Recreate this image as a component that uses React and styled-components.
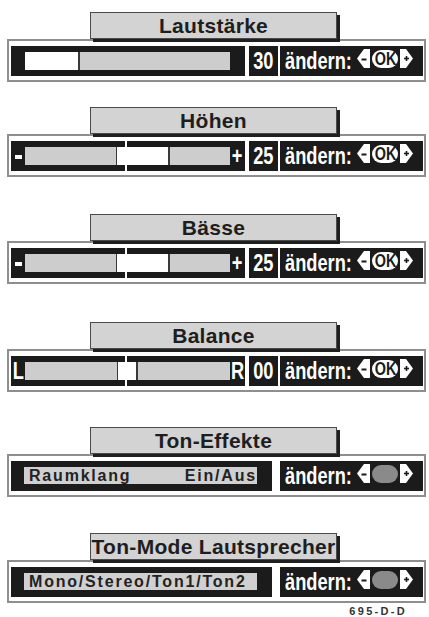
import styled, { createGlobalStyle } from 'styled-components';

const GlobalStyle = createGlobalStyle`
  * { box-sizing: border-box; }
  html, body { margin: 0; padding: 0; background: #fff; }
  body {
    width: 429px;
    height: 617px;
    overflow: hidden;
    font-family: "Liberation Sans", Arial, sans-serif;
  }
`;

const Page = styled.div`
  display: flex;
  flex-direction: column;
  width: 429px;
`;

const Section = styled.section`
  display: flex;
  flex-direction: column;
  margin-top: ${(p) => p.$top}px;
`;

const Title = styled.div`
  position: relative;
  z-index: 1;
  margin-left: 90px;
  width: 247px;
  height: 27px;
  background: #d3d3d3;
  border: 1px solid #4a4a4a;
  box-shadow: 3px 3px 0 #1f1f1f;
  font-size: 21px;
  font-weight: 700;
  line-height: 25px;
  letter-spacing: 0.3px;
  color: #1e1e1e;
  text-align: center;
  white-space: nowrap;
`;

const Panel = styled.div`
  display: flex;
  align-items: stretch;
  margin-left: 7px;
  width: 419px;
  height: 43px;
  padding: 5px 1px 4px 2px;
  border: 2px solid #8e8e8e;
  background: #fff;
`;

const Cond = styled.span`
  display: inline-block;
  font-size: 24px;
  font-weight: 700;
  line-height: 30px;
  color: #fff;
  white-space: nowrap;
  transform: scaleX(0.76);
  transform-origin: ${(p) => p.$origin || 'center'} center;
`;

const SliderBar = styled.div`
  display: flex;
  align-items: center;
  width: 234px;
  background: #1b1b1b;
`;

const Sign = styled.div`
  display: flex;
  align-items: center;
  justify-content: center;
  width: ${(p) => p.$w}px;
  height: 100%;
  overflow: visible;
`;

const Minus = styled.div`
  width: 7px;
  height: 4px;
  margin-top: 2px;
  background: #fff;
`;

const Track = styled.div`
  position: relative;
  flex: 1;
  height: 18px;
  background: #cdcdcd;
`;

const Fill = styled.div`
  position: absolute;
  top: 0;
  bottom: 0;
  background: #fff;
  border-left: ${(p) => (p.$edge ? '1px solid #3a3a3a' : 'none')};
  border-right: 2px solid #3a3a3a;
`;

const CenterMark = styled.div`
  position: absolute;
  left: 100px;
  top: -6px;
  bottom: -6px;
  width: 2px;
  background: #fff;
`;

const NumberBox = styled.div`
  display: flex;
  align-items: center;
  justify-content: center;
  width: 29px;
  margin: 0 2px 0 4px;
  background: #1b1b1b;
`;

const ChangeBox = styled.div`
  display: flex;
  align-items: center;
  width: 143px;
  margin-left: auto;
  padding-left: 5px;
  background: #1b1b1b;
`;

const ChangeLabel = styled.div`
  width: 72px;
  height: 100%;
  overflow: visible;
`;

const Control = styled.div`
  display: flex;
  align-items: center;
  margin-bottom: 5px;
`;

const Pill = styled.div`
  display: flex;
  align-items: center;
  justify-content: center;
  width: 26px;
  height: 18px;
  margin: 0 2px 0 2px;
  border-radius: 9px;
  background: ${(p) => (p.$empty ? '#8a8a8a' : '#fff')};
`;

const PillText = styled.span`
  display: inline-block;
  font-size: 18px;
  font-weight: 700;
  line-height: 18px;
  color: #1b1b1b;
  transform: scaleX(0.8);
`;

const TextBar = styled.div`
  display: flex;
  width: 261px;
  padding: 6px 15px 7px 13px;
  background: #1b1b1b;
`;

const TextField = styled.div`
  display: flex;
  flex: 1;
  align-items: center;
  justify-content: space-between;
  padding-left: 5px;
  background: #d0d0d0;
  font-size: 16px;
  font-weight: 700;
  line-height: 17px;
  letter-spacing: 1.8px;
  color: #222;
  white-space: nowrap;
`;

const Code = styled.div`
  margin-top: 2px;
  padding-right: 22px;
  text-align: right;
  font-size: 11px;
  font-weight: 700;
  line-height: 12px;
  letter-spacing: 2.3px;
  color: #333;
`;

function ArrowLeft() {
  return (
    <svg width="13" height="21" viewBox="0 0 13 21">
      <polygon points="0,10.5 7,1 13,1 13,20 7,20" fill="#fff" />
      <rect x="4.5" y="10.5" width="5" height="2" fill="#1b1b1b" />
    </svg>
  );
}

function ArrowRight() {
  return (
    <svg width="13" height="21" viewBox="0 0 13 21">
      <polygon points="0,1 6,1 13,10.5 6,20 0,20" fill="#fff" />
      <rect x="4" y="9.7" width="5" height="1.6" fill="#1b1b1b" />
      <rect x="5.7" y="8" width="1.6" height="5" fill="#1b1b1b" />
    </svg>
  );
}

function Change({ empty }) {
  return (
    <ChangeBox>
      <ChangeLabel>
        <Cond $origin="left">ändern:</Cond>
      </ChangeLabel>
      <Control>
        <ArrowLeft />
        <Pill $empty={empty}>{!empty && <PillText>OK</PillText>}</Pill>
        <ArrowRight />
      </Control>
    </ChangeBox>
  );
}

const sections = [
  { title: 'Lautstärke', top: 12, kind: 'slider', value: '30', fill: [0, 55], center: false, signs: ['', ''] },
  { title: 'Höhen', top: 25, kind: 'slider', value: '25', fill: [91, 54], center: true, signs: ['-', '+'] },
  { title: 'Bässe', top: 37, kind: 'slider', value: '25', fill: [91, 54], center: true, signs: ['-', '+'] },
  { title: 'Balance', top: 38, kind: 'slider', value: '00', fill: [92, 21], center: true, signs: ['L', 'R'] },
  { title: 'Ton-Effekte', top: 35, kind: 'text', left: 'Raumklang', right: 'Ein/Aus' },
  { title: 'Ton-Mode Lautsprecher', top: 36, kind: 'text', left: 'Mono/Stereo/Ton1/Ton2', right: '' },
];

function SignMark({ value }) {
  if (!value) return null;
  if (value === '-') return <Minus />;
  return <Cond>{value}</Cond>;
}

export default function App() {
  return (
    <Page>
      <GlobalStyle />
      {sections.map((s) => (
        <Section key={s.title} $top={s.top}>
          <Title>{s.title}</Title>
          <Panel>
            {s.kind === 'slider' ? (
              <>
                <SliderBar>
                  <Sign $w={14}><SignMark value={s.signs[0]} /></Sign>
                  <Track>
                    <Fill $edge={s.center} style={{ left: s.fill[0], width: s.fill[1] }} />
                    {s.center && <CenterMark />}
                  </Track>
                  <Sign $w={15}><SignMark value={s.signs[1]} /></Sign>
                </SliderBar>
                <NumberBox>
                  <Cond>{s.value}</Cond>
                </NumberBox>
                <Change />
              </>
            ) : (
              <>
                <TextBar>
                  <TextField>
                    <span>{s.left}</span>
                    {s.right && <span>{s.right}</span>}
                  </TextField>
                </TextBar>
                <Change empty />
              </>
            )}
          </Panel>
        </Section>
      ))}
      <Code>695-D-D</Code>
    </Page>
  );
}
